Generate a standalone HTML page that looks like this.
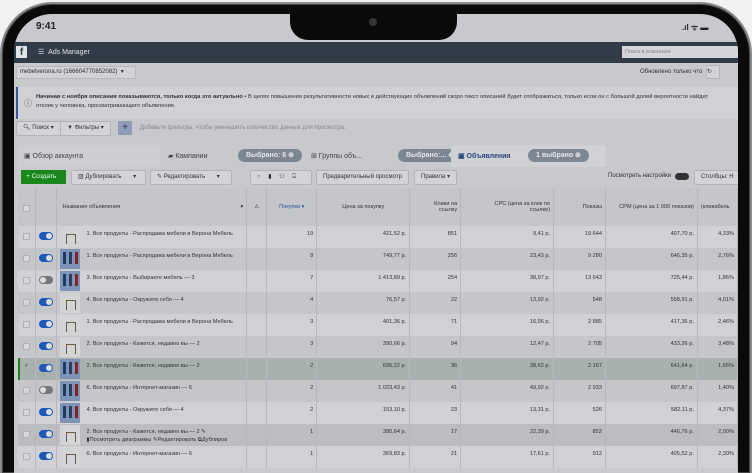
<!DOCTYPE html>
<html style="width:752px;height:473px;overflow:hidden"><head><meta charset="utf-8"><style>
*{margin:0;padding:0;box-sizing:border-box}
body{width:752px;height:473px;overflow:hidden;background:#f2f2f2;font-family:"Liberation Sans",sans-serif;color:#2e3033;position:relative}
.wrap{position:absolute;left:0;top:0;width:752px;height:473px;overflow:hidden}
.phone{position:absolute;left:0;top:2px;width:752px;height:471px;border-radius:52px 52px 0 0;background:#0a0a0a;border:2px solid #8a8a8a;border-bottom:none;box-shadow:inset 0 0 0 1px #444}
.screen{position:absolute;left:14px;top:14px;width:724px;height:459px;border-radius:38px 38px 0 0;background:#c8c9cc;overflow:hidden}
.a{position:absolute;white-space:nowrap}
.notch{position:absolute;left:276px;top:-2px;width:167px;height:28px;background:#0a0a0a;border-radius:0 0 18px 18px}
.btn{position:absolute;background:#d3d4d7;border:1px solid #b3b4b8;border-radius:2px;font-size:6px;line-height:13px;padding:0 6px;color:#333}
.pill{position:absolute;background:#7d8794;color:#e6e8eb;font-size:7px;font-weight:bold;border-radius:8px;line-height:13px;padding:0 8px}
table{position:absolute;left:4px;top:174px;border-collapse:collapse;font-size:5.6px;color:#333}
td{border-right:1px solid #b7b8bb;height:22px;vertical-align:top;padding:5px 3px 0;text-align:right}
tr.h td{height:38px;vertical-align:middle;padding-top:0;background:#cfd0d3}
tr:nth-child(even) td{background:#d0d1d4}
tr:nth-child(odd) td{background:#c5c6c9}
tr.sel td{background:#a8b1ad}
tr.hov td{background:#bcbdc0}
.cb{display:block;width:7px;height:7px;border:1px solid #b0b1b4;background:#d6d7da;margin:2px auto 0}
.tg{display:block;width:14px;height:8px;border-radius:4px;background:#1f58b8;position:relative;margin:1px auto}
.tg:after{content:"";position:absolute;right:1px;top:1px;width:6px;height:6px;border-radius:3px;background:#ddd}
.tg.off{background:#777}.tg.off:after{right:auto;left:1px}
.th{position:absolute;left:3px;top:1px;width:20px;height:20px;background:#d3d4d6}
.th.c:after{content:"";position:absolute;left:6px;top:7px;width:8px;height:9px;border:1px solid #6b5a44;border-bottom:none}
.th.b{background:#7e93b8}
.th.b:before{content:"";position:absolute;left:3px;top:3px;width:3px;height:12px;background:#203a66;box-shadow:6px 0 #2b3e5e,12px 0 #8a2020}
.nm{text-align:left;position:relative;padding-left:29px}
</style></head><body>
<div class="wrap">
<div class="phone"></div>
<div class="screen">
 <div class="a" style="left:22px;top:7px;font-size:10px;font-weight:bold;color:#222">9:41</div>
 <div class="notch"><div style="position:absolute;left:79px;top:6px;width:8px;height:8px;border-radius:4px;background:#333"></div></div>
 <div class="a" style="left:668px;top:8px;font-size:8px;color:#222;font-weight:bold">.ıl ᯤ ▬</div>
 <div class="a" style="left:0;top:28px;width:724px;height:21px;background:#323c48"></div>
 <div class="a" style="left:2px;top:32px;width:11px;height:12px;background:#dfe3ea;color:#323c48;font-weight:bold;font-size:10px;text-align:center;line-height:13px">f</div>
 <div class="a" style="left:24px;top:34px;font-size:7px;color:#dfe3ea">☰ &nbsp;Ads Manager</div>
 <div class="a" style="left:608px;top:32px;width:116px;height:12px;background:#d4d5d8;font-size:5.5px;color:#888;padding:3px 3px">Поиск в компании</div>
 <div class="a" style="left:2px;top:52px;width:120px;height:13px;background:#d2d3d6;border:1px solid #b8b9bc;font-size:6px;line-height:11px;padding-left:3px">mebelverona.ru (166604770852082) &nbsp;▾</div>
 <div class="a" style="left:626px;top:55px;font-size:6px">Обновлено только что</div>
 <div class="btn" style="left:692px;top:51px;width:14px;height:14px;padding:0">↻</div>
 <div class="a" style="left:2px;top:73px;width:722px;height:32px;background:#d0d1d4;border-left:2px solid #38579a"></div>
 <div class="a" style="left:10px;top:84px;font-size:8px;color:#555">ⓘ</div>
 <div class="a" style="left:22px;top:79px;font-size:5.8px;line-height:9px;color:#333"><b>Начиная с ноября описания показываются, только когда это актуально</b> • В целях повышения результативности новых и действующих объявлений скоро текст описаний будет отображаться, только если он с большой долей вероятности найдет<br>отклик у человека, просматривающего объявление.</div>
 <div class="btn" style="left:2px;top:107px">🔍︎ Поиск ▾</div>
 <div class="btn" style="left:46px;top:107px">▼ Фильтры ▾</div>
 <div class="a" style="left:104px;top:107px;width:14px;height:14px;background:#8e9cb5;color:#334;font-size:10px;text-align:center;line-height:13px">+</div>
 <div class="a" style="left:126px;top:111px;font-size:6px;color:#888">Добавьте фильтры, чтобы уменьшить количество данных для просмотра.</div>
 <div class="a" style="left:4px;top:131px;width:142px;height:22px;background:#cdced1;border-radius:4px 4px 0 0"></div>
 <div class="a" style="left:10px;top:138px;font-size:7px;color:#444">▣ Обзор аккаунта</div>
 <div class="a" style="left:154px;top:138px;font-size:7px;color:#444">▰ Кампании</div>
 <div class="pill" style="left:224px;top:135px">Выбрано: 6 ⊗</div>
 <div class="a" style="left:297px;top:138px;font-size:7px;color:#444">⊞ Группы объ...</div>
 <div class="pill" style="left:384px;top:135px">Выбрано:... ⊗</div>
 <div class="a" style="left:437px;top:131px;width:155px;height:22px;background:#d0d1d4;border-radius:4px 4px 0 0"></div>
 <div class="a" style="left:444px;top:138px;font-size:7px;color:#28457e;font-weight:bold">▣ Объявления</div>
 <div class="pill" style="left:514px;top:135px">1 выбрано ⊗</div>
 <div class="a" style="left:7px;top:156px;width:45px;height:14px;background:#1a871c;color:#dfe;font-size:6.5px;line-height:14px;padding-left:5px">+ Создать</div>
 <div class="btn" style="left:57px;top:156px;width:75px">▥ Дублировать &nbsp;&nbsp;&nbsp;&nbsp;&nbsp;&nbsp;▾</div>
 <div class="btn" style="left:136px;top:156px;width:82px">✎ Редактировать &nbsp;&nbsp;&nbsp;&nbsp;&nbsp;&nbsp;▾</div>
 <div class="btn" style="left:236px;top:156px;width:62px;letter-spacing:3px">○ ▮ ⚇ ⍈</div>
 <div class="btn" style="left:302px;top:156px">Предварительный просмотр</div>
 <div class="btn" style="left:400px;top:156px">Правила ▾</div>
 <div class="a" style="left:594px;top:159px;font-size:6px">Посмотреть настройки</div>
 <div class="a" style="left:661px;top:159px;width:14px;height:7px;border-radius:4px;background:#333"></div>
 <div class="btn" style="left:680px;top:156px;width:50px">Столбцы: Н</div>
 <table>
  <colgroup><col style="width:18px"><col style="width:19px"><col style="width:190px"><col style="width:20px"><col style="width:50px"><col style="width:93px"><col style="width:51px"><col style="width:93px"><col style="width:52px"><col style="width:92px"><col style="width:40px"></colgroup>
  <tr class="h"><td><span class="cb"></span></td><td></td><td style="text-align:left;padding-left:5px">Название объявления<span style="float:right">▾</span></td><td style="text-align:center">⚠</td><td style="color:#2c55a8;text-align:center">Покупки ▾</td><td style="text-align:center">Цена за покупку</td><td>Клики на<br>ссылку</td><td>CPC (цена за клик по<br>ссылке)</td><td>Показы</td><td>CPM (цена за 1 000 показов)</td><td style="text-align:left">(кликабель</td></tr>
  <tr><td><span class="cb"></span></td><td><span class="tg"></span></td><td class="nm"><span class="th c"></span>1. Все продукты - Распродажа мебели в Верона Мебель</td><td></td><td>19</td><td>421,52 р.</td><td>851</td><td>9,41 р.</td><td>19 644</td><td>407,70 р.</td><td>4,33%</td></tr>
  <tr><td><span class="cb"></span></td><td><span class="tg"></span></td><td class="nm"><span class="th b"></span>1. Все продукты - Распродажа мебели в Верона Мебель</td><td></td><td>8</td><td>749,77 р.</td><td>256</td><td>23,43 р.</td><td>9 280</td><td>646,35 р.</td><td>2,76%</td></tr>
  <tr><td><span class="cb"></span></td><td><span class="tg off"></span></td><td class="nm"><span class="th b"></span>3. Все продукты - Выбираете мебель — 3</td><td></td><td>7</td><td>1 413,89 р.</td><td>254</td><td>38,97 р.</td><td>13 643</td><td>725,44 р.</td><td>1,86%</td></tr>
  <tr><td><span class="cb"></span></td><td><span class="tg"></span></td><td class="nm"><span class="th c"></span>4. Все продукты - Окружите себя — 4</td><td></td><td>4</td><td>76,57 р.</td><td>22</td><td>13,92 р.</td><td>548</td><td>558,91 р.</td><td>4,01%</td></tr>
  <tr><td><span class="cb"></span></td><td><span class="tg"></span></td><td class="nm"><span class="th c"></span>1. Все продукты - Распродажа мебели в Верона Мебель</td><td></td><td>3</td><td>401,36 р.</td><td>71</td><td>16,96 р.</td><td>2 885</td><td>417,36 р.</td><td>2,46%</td></tr>
  <tr><td><span class="cb"></span></td><td><span class="tg"></span></td><td class="nm"><span class="th c"></span>2. Все продукты - Кажется, недавно вы — 2</td><td></td><td>3</td><td>390,66 р.</td><td>94</td><td>12,47 р.</td><td>2 705</td><td>433,26 р.</td><td>3,48%</td></tr>
  <tr class="sel"><td style="box-shadow:inset 2px 0 #1a871c;text-align:center">✓</td><td><span class="tg"></span></td><td class="nm"><span class="th b"></span>2. Все продукты - Кажется, недавно вы — 2</td><td></td><td>2</td><td>695,22 р.</td><td>36</td><td>38,62 р.</td><td>2 167</td><td>641,64 р.</td><td>1,66%</td></tr>
  <tr><td><span class="cb"></span></td><td><span class="tg off"></span></td><td class="nm"><span class="th b"></span>6. Все продукты - Интернет-магазин — 6</td><td></td><td>2</td><td>1 023,43 р.</td><td>41</td><td>49,92 р.</td><td>2 933</td><td>697,87 р.</td><td>1,40%</td></tr>
  <tr><td><span class="cb"></span></td><td><span class="tg"></span></td><td class="nm"><span class="th b"></span>4. Все продукты - Окружите себя — 4</td><td></td><td>2</td><td>153,10 р.</td><td>23</td><td>13,31 р.</td><td>526</td><td>582,11 р.</td><td>4,37%</td></tr>
  <tr class="hov"><td><span class="cb"></span></td><td><span class="tg"></span></td><td class="nm"><span class="th c"></span>2. Все продукты - Кажется, недавно вы — 2 ✎<br><span style="line-height:10px">▮Посмотреть диаграммы ✎Редактировать ⧉Дублиров</span></td><td></td><td>1</td><td>380,64 р.</td><td>17</td><td>22,39 р.</td><td>852</td><td>446,76 р.</td><td>2,00%</td></tr>
  <tr><td><span class="cb"></span></td><td><span class="tg"></span></td><td class="nm"><span class="th c"></span>6. Все продукты - Интернет-магазин — 6</td><td></td><td>1</td><td>369,83 р.</td><td>21</td><td>17,61 р.</td><td>912</td><td>405,52 р.</td><td>2,30%</td></tr>
 </table>
</div>
</div>
</body></html>
